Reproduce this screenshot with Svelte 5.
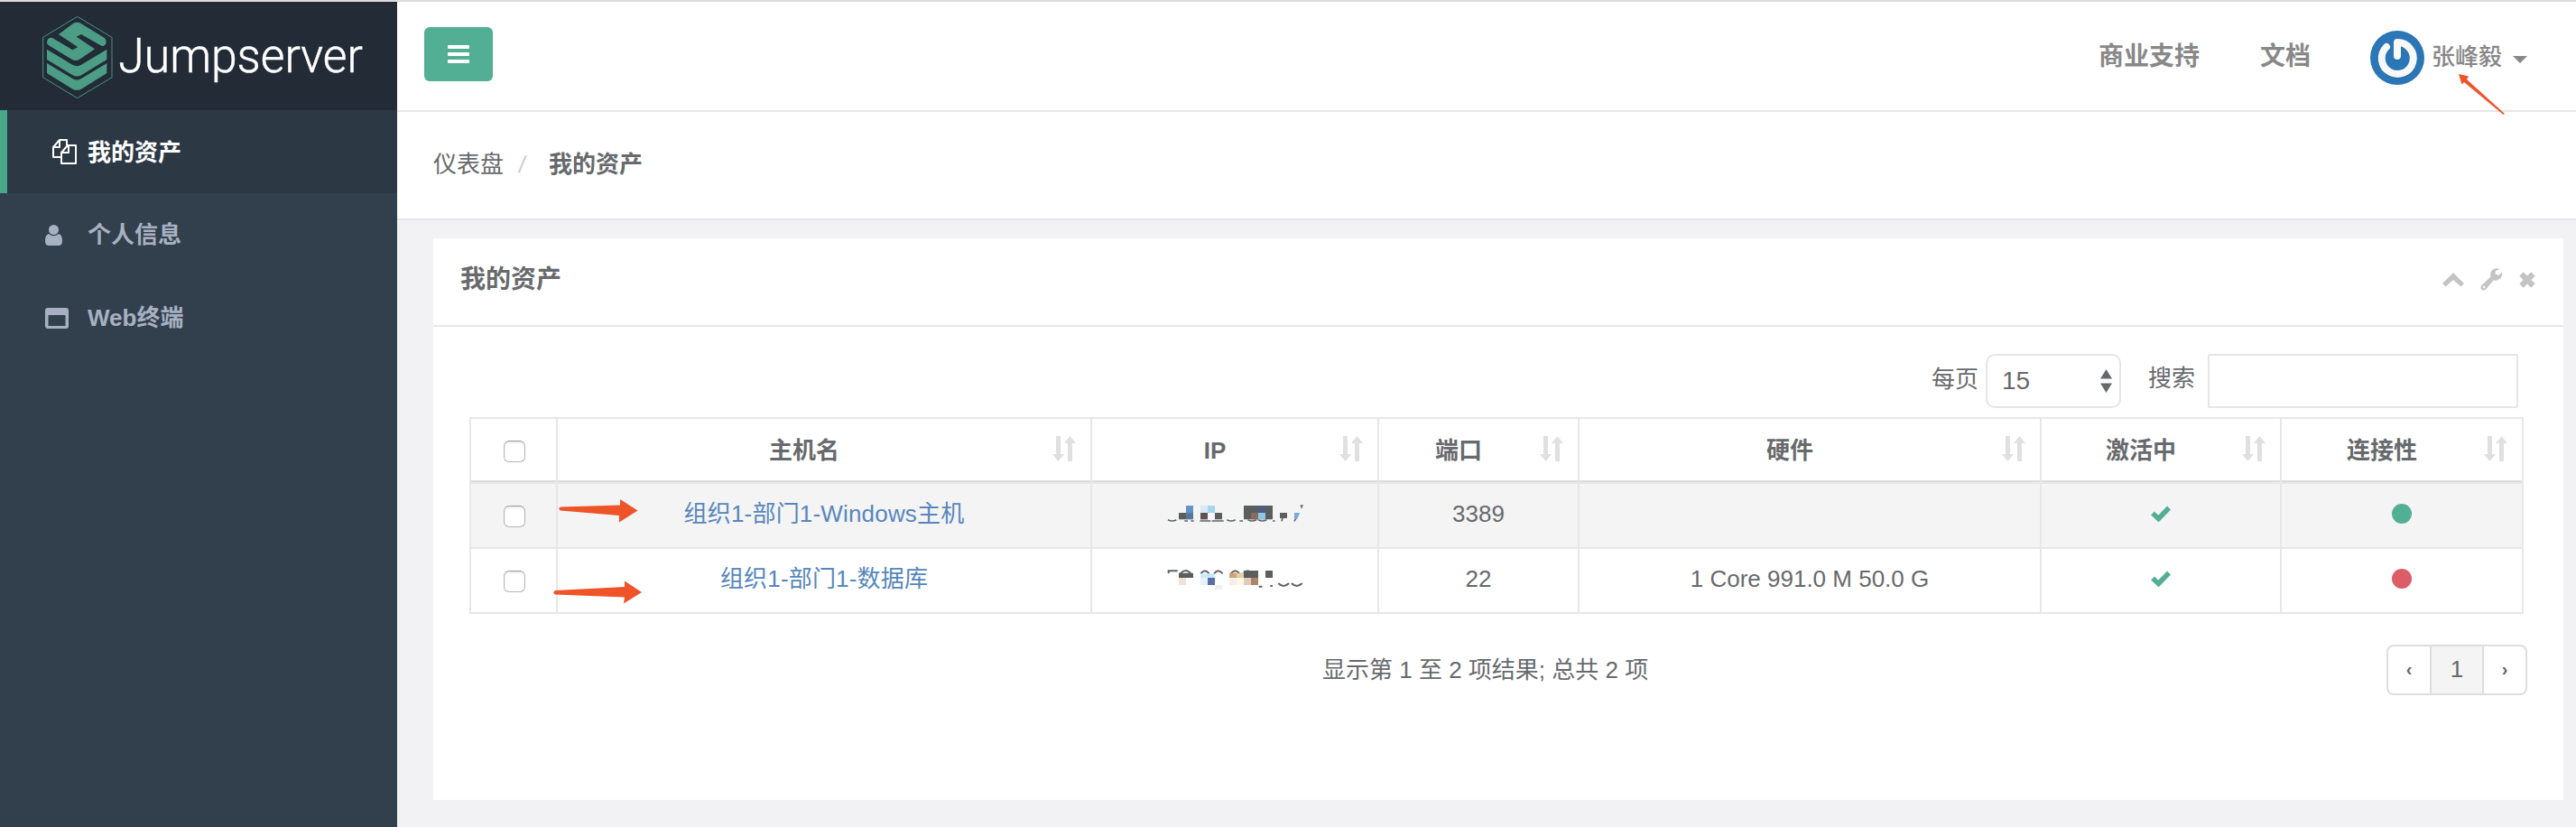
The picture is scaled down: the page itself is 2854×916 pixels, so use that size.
<script>
  const columns = ['主机名', 'IP', '端口', '硬件', '激活中', '连接性'];
  const rows = [
    { host: '组织1-部门1-Windows主机', port: '3389', hardware: '', online: true, striped: true },
    { host: '组织1-部门1-数据库', port: '22', hardware: '1 Core 991.0 M 50.0 G', online: false, striped: false }
  ];
</script>

{#snippet sortIcon()}
  <svg class="sort" width="26" height="28" viewBox="0 0 26 28">
    <path d="M4 0h5v20h4l-6.500 8L0 20h4zM17 28h5V8h4L19.500 0 13 8h4z" />
  </svg>
{/snippet}

<div class="page">
  <aside>
    <div class="brand">
      <svg width="370" height="110" viewBox="0 0 1110 330">
        <path d="M137 25 252 94V227L137 296 23 227V94Z" fill="none" stroke="#4a9384" stroke-width="3" />
        <g fill="#4c9d86">
          <path d="M123 48Q137 41 149 48L226 95Q235 102 232 115 228 126 217 122L150 84 134 92 195 133 148 165Q134 175 120 168L42 121Q34 115 37 104 42 93 54 96L121 136 139 127 75 84Z" />
          <path d="M36 134 122 186Q136 193 149 186L235 134V168L150 220Q136 227 122 220L36 168Z" />
          <path d="M36 180 122 232Q136 239 149 232L235 180V213L150 266Q136 273 122 266L36 213Z" />
        </g>
        <text x="274" y="210" textLength="812" lengthAdjust="spacingAndGlyphs">Jumpserver</text>
      </svg>
    </div>
    <nav>
      <a class="active" href="#assets">
        <svg class="files" width="27" height="28" viewBox="0 0 27 28" fill="none" stroke="#fff" stroke-width="2" stroke-linejoin="round">
          <path d="M10 20H1V9L8 1h8v6M8 1v8H1M10 27V15l7-8h9v20zM18 7v8h-8" />
        </svg>
        <span>我的资产</span>
      </a>
      <a href="#profile">
        <svg width="20" height="23" viewBox="0 0 20 23" fill="#a7b1c2">
          <circle cx="9.500" cy="5.500" r="5.500" />
          <path d="M4 10Q9.500 14.500 15 10 19 11 19 18q0 5-4 5H4q-4 0-4-5 0-7 4-8z" />
        </svg>
        <span>个人信息</span>
      </a>
      <a href="#terminal">
        <svg width="26" height="23" viewBox="0 0 26 23">
          <path fill="#a7b1c2" fill-rule="evenodd" d="M3 0h20q3 0 3 3v17q0 3-3 3H3q-3 0-3-3V3q0-3 3-3zM3.500 8v12h19V8z" />
        </svg>
        <span>Web终端</span>
      </a>
    </nav>
  </aside>

  <main>
    <header>
      <button class="menu" aria-label="menu"><i></i><i></i><i></i></button>
      <div class="links">
        <b>商业支持</b>
        <b>文档</b>
        <div class="user">
          <svg width="60" height="60" viewBox="0 0 60 60">
            <circle cx="30" cy="30" r="30" fill="#2b76b6" />
            <g fill="none" stroke-linecap="round" stroke-width="8">
              <path d="M18 18A17.500 17.500 0 1 0 30 13V28" stroke="#1d5d95" opacity=".6" transform="translate(0 1)" stroke-linejoin="round" />
              <path d="M18 18A17.500 17.500 0 1 0 30 13V28" stroke="#f7f8f8" stroke-linejoin="round" />
            </g>
          </svg>
          <span>张峰毅</span>
          <i class="caret"></i>
        </div>
      </div>
      <svg class="mark mark-user" width="54" height="48" viewBox="0 0 54 48">
        <path d="M1 1 12 3.500 10 7 52 45 50.500 46 7 10 4.500 12.500Z" />
      </svg>
    </header>

    <div class="crumbs"><span>仪表盘</span><em>/</em><b>我的资产</b></div>

    <section class="card">
      <div class="card-head">
        <b>我的资产</b>
        <div class="tools">
          <svg width="24" height="16" viewBox="0 0 24 16"><path d="M12 0 24 12 20.500 15.500 12 8 3.500 15.500 0 12Z" /></svg>
          <svg width="25" height="25" viewBox="0 0 25 25"><path fill-rule="evenodd" d="M24 4.500 20 8 16.500 6.500 17 3 21.500 1C16 -1.500 9.500 3 11.500 9.500L1 19.500Q-.500 22 1.500 24 4 25.500 6 23.500L14.500 13.500C20.500 15 25.500 9.500 24 4.500ZM4 19.700a1.300 1.300 0 1 1 0 2.600 1.300 1.300 0 0 1 0-2.600z" /></svg>
          <svg width="18" height="18" viewBox="0 0 18 18"><path d="M2.500 2.500 15.500 15.500M15.500 2.500 2.500 15.500" stroke="#c4c4c4" stroke-width="6.200" /></svg>
        </div>
      </div>

      <div class="card-body">
        <div class="filters">
          <span>每页</span>
          <div class="select">
            <span>15</span>
            <svg width="13" height="26" viewBox="0 0 13 26"><path d="M6.500 0 13 10.500H0ZM0 15.500H13L6.500 26Z" /></svg>
          </div>
          <span class="search-label">搜索</span>
          <input type="text" aria-label="搜索" />
        </div>

        <div class="table">
          <div class="row head">
            <div class="cell"><i class="box"></i></div>
            {#each columns as name}
              <div class="cell"><span>{name}</span>{@render sortIcon()}</div>
            {/each}
          </div>
          {#each rows as row, i}
            <div class="row" class:striped={row.striped}>
              <div class="cell"><i class="box"></i></div>
              <div class="cell host">
                <a href="#host">{row.host}</a>
                {#if i === 0}
                  <svg class="mark mark-first" width="90" height="28" viewBox="0 0 90 28">
                    <path d="M3 9.500 69 7.500V1L88.500 13.500 68 26.500V19L3 13.500Q-.500 11.500 3 9.500Z" />
                  </svg>
                {:else}
                  <svg class="mark mark-second" width="100" height="28" viewBox="0 0 100 28">
                    <path d="M3 12 80 8V1.500L99 14 79 26.500 80 19.500 3 16.500Q-.500 14.500 3 12Z" />
                  </svg>
                {/if}
              </div>
              <div class="cell">
                {#if i === 0}
                  <svg class="mosaic" width="160" height="40" viewBox="24 33 480 120">
                    <g fill="none" stroke="#606364" stroke-width="5">
                      <path d="M42 107q14 8 28 0M97 111h11M118 111h10M148 111h36M188 111h39M238 107q14 8 28 0M280 111h11M308 107q13 8 28 0M342 107q14 8 28 0M390 111h8M420 112l3-12M462 112l8-14M482 60l6 0-3 8" />
                    </g>
                    <g fill="#5b5e5f">
                      <path d="M78 84h24v22H78zM198 84h24v22h-24zM294 60h96v46h-96zM414 84h24v18h-24z" />
                    </g>
                    <path fill="#5d5153" d="M150 84h24v22h-24z" />
                    <path fill="#6593c8" d="M102 60h24v24h-24z" />
                    <path fill="#58779d" d="M102 84h24v22h-24z" />
                    <path fill="#d9e9f2" d="M150 60h24v24h-24z" />
                    <path fill="#a5d5ee" d="M174 60h24v24h-24z" />
                    <path fill="#f9fafb" d="M174 84h24v22h-24z" />
                    <path fill="#515d7e" d="M342 60h24v24h-24z" />
                    <path fill="#866c5c" d="M318 84h24v22h-24z" />
                    <path fill="#8cc7e8" d="M342 84h24v22h-24z" />
                    <path fill="#78aadb" d="M462 84h19l-10 20h-9z" />
                  </svg>
                {:else}
                  <svg class="mosaic" width="160" height="40" viewBox="24 249 480 120">
                    <g fill="none" stroke="#606364" stroke-width="6">
                      <path d="M44 285v-8h30M83 286q18-20 35 0M151 286q14-19 28 0M195 286q14-19 29 0M251 286q14-19 29 0M293 286q14-19 29 0M344 329h11M382 327h8M409 318q17 18 35 0M453 318q17 18 35 0" />
                    </g>
                    <g fill="#5b5e5f">
                      <path d="M78 284h48v16H78zM294 276h48v24h-48zM366 276h24v24h-24z" />
                    </g>
                    <path fill="#f3e2d4" d="M78 300h24v24H78z" />
                    <path fill="#cce9f8" d="M150 286h48v14h-48z" />
                    <path fill="#e5f3f9" d="M150 300h24v24h-24z" />
                    <path fill="#566fab" d="M174 300h24v24h-24z" />
                    <path fill="#f0f0f0" d="M198 324h24v15h-24z" />
                    <path fill="#d1a477" d="M246 284h24v16h-24z" />
                    <path fill="#e5cda8" d="M270 284h24v16h-24z" />
                    <path fill="#f6eeea" d="M246 300h24v24h-24z" />
                    <path fill="#fff7e3" d="M270 300h24v24h-24z" />
                    <path fill="#dfccbd" d="M294 300h24v24h-24z" />
                    <path fill="#ab8568" d="M318 300h24v24h-24z" />
                  </svg>
                {/if}
              </div>
              <div class="cell">{row.port}</div>
              <div class="cell">{row.hardware}</div>
              <div class="cell">
                <svg class="tick" width="22" height="18" viewBox="0 0 22 18"><path d="M2 8.500 8.500 14.500 20 2.500" fill="none" stroke="#53af94" stroke-width="5.500" /></svg>
              </div>
              <div class="cell"><i class="dot" class:off={!row.online}></i></div>
            </div>
          {/each}
        </div>

        <div class="foot">
          <span class="info">显示第 1 至 2 项结果; 总共 2 项</span>
          <div class="pager"><span>‹</span><span class="current">1</span><span>›</span></div>
        </div>
      </div>
    </section>
  </main>
</div>

<style>
  :global(body) {
    background: #f2f2f4;
  }
  .page,
  .page * {
    box-sizing: border-box;
  }
  .page {
    display: flex;
    height: 916px;
    overflow: hidden;
    border-top: 2px solid #dcdcdc;
    font: 26px/36px 'Liberation Sans', 'Noto Sans CJK SC', sans-serif;
    color: #676a6c;
  }
  svg {
    display: block;
    flex: none;
  }
  a {
    text-decoration: none;
  }
  aside {
    width: 440px;
    background: #323f4d;
  }
  .brand {
    height: 120px;
    padding: 8px 0 0 40px;
    background: #232c36;
  }
  .brand text {
    font: 300 159px Roboto, sans-serif;
    fill: #fff;
    stroke: #fff;
    stroke-width: 1.5px;
  }
  nav a {
    display: flex;
    align-items: center;
    height: 92px;
    padding-left: 50px;
    color: #a7b1c2;
    font-weight: 700;
  }
  nav span {
    margin-left: auto;
    width: 343px;
  }
  nav .active {
    border-left: 8px solid #4ba78b;
    background: #2d3845;
    color: #fff;
  }
  nav .active span {
    padding-top: 1px;
  }
  main {
    flex: 1;
    min-width: 0;
  }
  header {
    position: relative;
    display: flex;
    justify-content: space-between;
    height: 122px;
    padding: 28px 54px 0 30px;
    border-bottom: 2px solid #e7e8ea;
    background: #fff;
    color: #888;
  }
  .menu {
    display: flex;
    flex-direction: column;
    align-items: center;
    justify-content: center;
    gap: 4px;
    width: 76px;
    height: 60px;
    padding: 0;
    border: 0;
    border-radius: 6px;
    background: #53af94;
  }
  .menu i {
    width: 24px;
    height: 4px;
    border-radius: 1px;
    background: #fff;
  }
  .links {
    display: flex;
    align-items: flex-start;
    font-size: 28px;
  }
  .links b {
    margin: 15px 67px 0 0;
  }
  .links b + b {
    margin-right: 66px;
  }
  .user {
    display: flex;
    align-items: center;
    height: 60px;
    margin-top: 4px;
    font-size: 26px;
  }
  .user span {
    margin: 0 12px 2px 8px;
    font-weight: 500;
  }
  .caret {
    margin-top: 4px;
    border: 8px solid transparent;
    border-top-color: #888;
    border-bottom: 0;
  }
  .mark {
    position: absolute;
    fill: #ee5427;
  }
  .mark-user {
    left: 2283px;
    top: 79px;
  }
  .mark-first {
    left: 0;
    top: 16px;
  }
  .mark-second {
    left: -6px;
    top: 34px;
  }
  .crumbs {
    display: flex;
    align-items: center;
    height: 120px;
    padding: 0 0 2px 40px;
    border-bottom: 2px solid #e7e8ea;
    background: #fff;
  }
  .crumbs em {
    width: 11px;
    margin: 0 22px 0 17px;
    font-style: normal;
    color: #ccc;
    transform: skewX(-8deg);
  }
  .card {
    height: 622px;
    margin: 20px 14px 0 40px;
    background: #fff;
  }
  .card-head {
    display: flex;
    align-items: center;
    justify-content: space-between;
    height: 98px;
    padding: 0 31px 5px 30px;
    border-bottom: 2px solid #e7e8ea;
    font-size: 28px;
  }
  .tools {
    display: flex;
    align-items: center;
    gap: 18px;
    fill: #c4c4c4;
  }
  .card-body {
    padding: 30px 40px 0;
  }
  .filters {
    display: flex;
    align-items: center;
    justify-content: flex-end;
    height: 60px;
    padding-right: 10px;
  }
  .filters > span {
    margin: 0 8px 4px 0;
  }
  .select {
    display: flex;
    align-items: center;
    justify-content: space-between;
    width: 150px;
    height: 60px;
    padding: 0 8px 0 16px;
    border: 2px solid #e5e6e7;
    border-radius: 10px;
    font-size: 28px;
    fill: #676a6c;
  }
  .filters .search-label {
    margin: 0 14px 6px 30px;
  }
  input {
    width: 344px;
    height: 60px;
    border: 2px solid #e5e6e7;
    border-radius: 2px;
    background: #fff;
  }
  .table {
    width: 2276px;
    margin-top: 10px;
    border: solid #e7e7e7;
    border-width: 2px 0 0 2px;
  }
  .row {
    display: grid;
    grid-template-columns: 96px 592px 318px 222px 512px 266px 268px;
    height: 72px;
  }
  .cell {
    position: relative;
    display: flex;
    align-items: center;
    justify-content: center;
    padding-bottom: 4px;
    border: solid #e7e7e7;
    border-width: 0 2px 2px 0;
  }
  .striped {
    background: #f4f4f4;
  }
  .head .cell {
    padding: 0 16px 0 0;
    font-weight: 700;
    box-shadow: inset 0 -2px #ddd;
  }
  .head .cell span {
    flex: 1;
    padding: 0 18px 0 16px;
    text-align: center;
  }
  .sort {
    margin-bottom: 4px;
    fill: #e0e0e0;
  }
  .cell:first-child,
  .head .cell:first-child {
    padding: 2px 0 0 2px;
  }
  .box {
    width: 24px;
    height: 24px;
    border: 1.5px solid #b4b4b4;
    border-top-color: #999;
    border-radius: 6px;
    background: #fff;
    box-shadow: inset 0 2px 2px #eee;
  }
  .host a {
    color: #5686bd;
    letter-spacing: 0.18px;
  }
  .mosaic {
    margin-top: 4px;
  }
  .dot {
    width: 22px;
    height: 22px;
    border-radius: 50%;
    background: #53af94;
  }
  .dot.off {
    background: #dc5c68;
  }
  .foot {
    display: flex;
    justify-content: space-between;
    margin: 34px 0 0 945px;
  }
  .info {
    padding-top: 10px;
  }
  .pager {
    display: flex;
    width: 156px;
    height: 56px;
    border: 2px solid #ddd;
    border-radius: 8px;
    overflow: hidden;
    text-align: center;
    line-height: 50px;
  }
  .pager span {
    flex: 1;
    font-size: 20px;
    font-weight: 700;
  }
  .pager .current {
    flex: none;
    width: 60px;
    border: solid #ddd;
    border-width: 0 2px;
    background: #f4f4f4;
    font-size: 26px;
    font-weight: 400;
  }
</style>
